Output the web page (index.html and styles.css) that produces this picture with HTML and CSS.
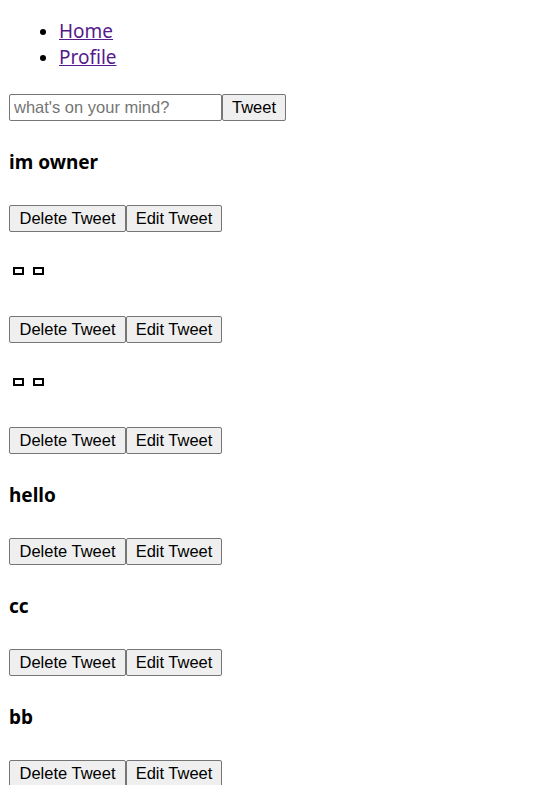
FILE: index.html
```html
<!DOCTYPE html>
<html>
<head>
<meta charset="utf-8">
<link rel="stylesheet" href="styles.css">
</head>
<body>
<nav>
  <ul class="nav-list">
    <li><a class="nav-link" href="#">Home</a></li>
    <li><a class="nav-link" href="#">Profile</a></li>
  </ul>
</nav>
<form class="tweet-form">
  <input class="tweet-input" type="text" placeholder="what's on your mind?"><button class="btn btn-tweet" type="button">Tweet</button>
</form>
<div class="tweets">
  <div class="tweet">
    <h4 class="tweet-text">im owner</h4>
    <div class="tweet-actions"><button class="btn btn-delete">Delete Tweet</button><button class="btn btn-edit">Edit Tweet</button></div>
  </div>
  <div class="tweet">
    <h4 class="tweet-text"><span class="tofu"></span><span class="tofu"></span></h4>
    <div class="tweet-actions"><button class="btn btn-delete">Delete Tweet</button><button class="btn btn-edit">Edit Tweet</button></div>
  </div>
  <div class="tweet">
    <h4 class="tweet-text"><span class="tofu"></span><span class="tofu"></span></h4>
    <div class="tweet-actions"><button class="btn btn-delete">Delete Tweet</button><button class="btn btn-edit">Edit Tweet</button></div>
  </div>
  <div class="tweet">
    <h4 class="tweet-text">hello</h4>
    <div class="tweet-actions"><button class="btn btn-delete">Delete Tweet</button><button class="btn btn-edit">Edit Tweet</button></div>
  </div>
  <div class="tweet">
    <h4 class="tweet-text">cc</h4>
    <div class="tweet-actions"><button class="btn btn-delete">Delete Tweet</button><button class="btn btn-edit">Edit Tweet</button></div>
  </div>
  <div class="tweet">
    <h4 class="tweet-text">bb</h4>
    <div class="tweet-actions"><button class="btn btn-delete">Delete Tweet</button><button class="btn btn-edit">Edit Tweet</button></div>
  </div>
</div>
</body>
</html>
```
FILE: styles.css
```css
body {
  margin: 9px;
  font-family: "Noto Sans", sans-serif;
  font-size: 18px;
  line-height: 26px;
  color: #000;
  background: #fff;
}
.nav-list {
  margin: 9px 0 24px;
  padding-left: 50px;
}
.nav-link {
  color: #551a8b;
  font-size: 19px;
}
.tweet-form {
  margin: 0;
  display: flex;
  height: 27px;
}
.tweet-input {
  box-sizing: border-box;
  width: 213px;
  height: 27px;
  margin: 0;
  padding: 1px 4px;
  border: 1px solid #767676;
  border-radius: 2px;
  font-family: "Liberation Sans", Arial, sans-serif;
  font-size: 16.5px;
}
.tweet-input::placeholder {
  color: #757575;
}
.btn {
  box-sizing: border-box;
  height: 27px;
  margin: 0;
  padding: 0 8px;
  border: 1px solid #767676;
  border-radius: 2px;
  background: #efefef;
  color: #000;
  font-family: "Liberation Sans", Arial, sans-serif;
  font-size: 16.5px;
}
.btn-tweet {
  width: 64px;
}
.btn-delete {
  width: 117px;
}
.btn-edit {
  width: 96px;
}
.tweet-actions {
  display: flex;
  height: 27px;
}
.tweet-text {
  font-size: 19px;
  line-height: 30px;
  font-weight: bold;
  margin: 26px 0 28px;
}
.tofu {
  display: inline-block;
  box-sizing: border-box;
  width: 11px;
  height: 8px;
  border: 2px solid #000;
  margin-left: 4px;
  margin-right: 5px;
  vertical-align: 5px;
}
```
